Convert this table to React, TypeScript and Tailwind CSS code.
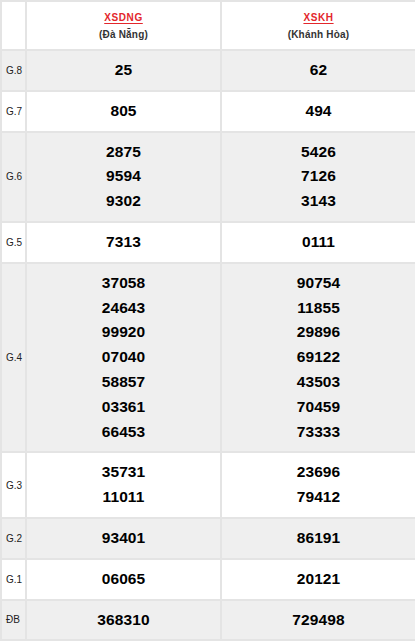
type Row = {
  label: string;
  left: string[];
  right: string[];
};

const rows: Row[] = [
  { label: "G.8", left: ["25"], right: ["62"] },
  { label: "G.7", left: ["805"], right: ["494"] },
  { label: "G.6", left: ["2875", "9594", "9302"], right: ["5426", "7126", "3143"] },
  { label: "G.5", left: ["7313"], right: ["0111"] },
  {
    label: "G.4",
    left: ["37058", "24643", "99920", "07040", "58857", "03361", "66453"],
    right: ["90754", "11855", "29896", "69122", "43503", "70459", "73333"],
  },
  { label: "G.3", left: ["35731", "11011"], right: ["23696", "79412"] },
  { label: "G.2", left: ["93401"], right: ["86191"] },
  { label: "G.1", left: ["06065"], right: ["20121"] },
  { label: "ĐB", left: ["368310"], right: ["729498"] },
];

function NumberCell({ values, bg }: { values: string[]; bg: string }) {
  return (
    <div className={`${bg} py-[7px] flex flex-col items-center justify-center`}>
      {values.map((v, i) => (
        <span
          key={i}
          className="text-[15.5px] font-bold leading-[24.8px] text-black tracking-[0.1px]"
        >
          {v}
        </span>
      ))}
    </div>
  );
}

function Province({ code, name }: { code: string; name: string }) {
  return (
    <div className="bg-white pt-[7px] pb-[6px] flex flex-col items-center">
      <a className="text-[10px] font-bold leading-[17px] text-[#e3262b] underline underline-offset-2 tracking-[0.6px]">
        {code}
      </a>
      <span className="text-[10px] font-bold leading-[17px] text-[#333] tracking-[0.2px]">{name}</span>
    </div>
  );
}

export default function App() {
  return (
    <div className="w-[415px] h-[644px] overflow-hidden bg-white" style={{ fontFamily: '"Liberation Sans", Arial, sans-serif' }}>
      <div className="w-[417px] grid grid-cols-[23px_193px_193px] gap-[2px] p-[2px] bg-[#e4e4e4]">
        <div className="bg-white" />
        <Province code="XSDNG" name="(Đà Nẵng)" />
        <Province code="XSKH" name="(Khánh Hòa)" />

        {rows.map((r, i) => {
          const bg = i % 2 === 0 ? "bg-[#efefef]" : "bg-white";
          return [
            <div
              key={r.label + "l"}
              className={`${bg} flex items-center pl-[4px] text-[10px] text-[#222]`}
            >
              {r.label}
            </div>,
            <NumberCell key={r.label + "a"} values={r.left} bg={bg} />,
            <NumberCell key={r.label + "b"} values={r.right} bg={bg} />,
          ];
        })}
      </div>
    </div>
  );
}
